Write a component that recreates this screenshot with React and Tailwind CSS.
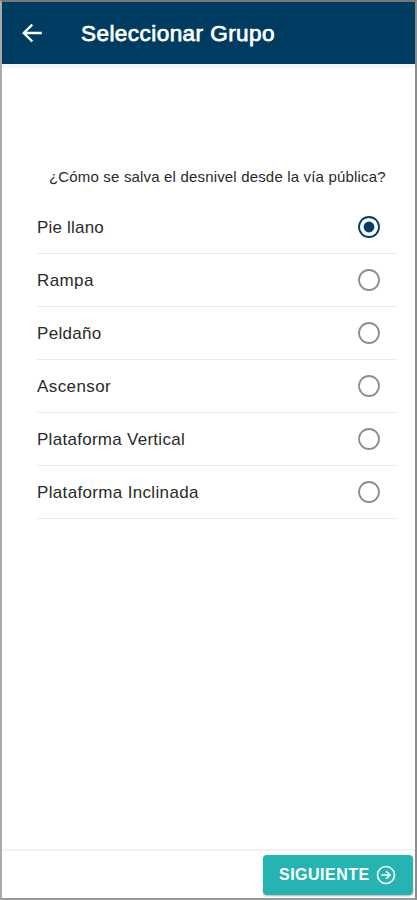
const OPTIONS = [
  { id: 'llano', label: 'Pie llano', tracking: 'tracking-[0.2px]' },
  { id: 'rampa', label: 'Rampa', tracking: 'tracking-[0.4px]' },
  { id: 'peldano', label: 'Peldaño', tracking: 'tracking-[0.3px]' },
  { id: 'ascensor', label: 'Ascensor', tracking: 'tracking-[0.4px]' },
  { id: 'vertical', label: 'Plataforma Vertical', tracking: 'tracking-[0.28px]' },
  { id: 'inclinada', label: 'Plataforma Inclinada', tracking: 'tracking-[0.34px]' },
];

function BackArrow() {
  return (
    <svg className="w-[22px] h-[20px]" viewBox="0 0 22 20" fill="none" stroke="currentColor" strokeWidth="2.3">
      <path d="M20.8 10H2.8M11.3 1.6L2.7 10L11.3 18.4" />
    </svg>
  );
}

function NextIcon() {
  return (
    <svg className="w-5 h-5" viewBox="0 0 20 20" fill="none" stroke="currentColor" strokeWidth="1.6">
      <circle cx="10" cy="10" r="8.5" />
      <path d="M5.4 10H13.8M10.2 6.2L14 10L10.2 13.8" />
    </svg>
  );
}

function Radio({ checked }) {
  return (
    <svg className={`w-[22px] h-[22px] ${checked ? 'text-[#003c6c]' : 'text-[#8e8e8e]'}`} viewBox="0 0 22 22">
      <circle cx="11" cy="11" r="10" fill="none" stroke="currentColor" strokeWidth="1.8" />
      {checked && <circle cx="11" cy="11" r="5.4" fill="currentColor" />}
    </svg>
  );
}

export default function App() {
  const selected = 'llano';

  return (
    <div className="flex flex-col w-[417px] h-[900px] bg-white border-2 border-t-[#777777] border-l-[#aaaaaa] border-r-[#8c8c8c] border-b-[#999999] font-['Liberation_Sans',Arial,sans-serif] text-[#2a2a2a]">
      <header className="flex items-center h-[62px] pl-[19px] bg-[#003c62] text-white shrink-0">
        <BackArrow />
        <h1 className="ml-[38px] pt-0.5 text-[22.5px] leading-[60px] tracking-[0.45px] [-webkit-text-stroke:0.75px_white] whitespace-nowrap">
          Seleccionar Grupo
        </h1>
      </header>
      <div className="h-1 bg-[#f4f4f4] shrink-0" />

      <main className="flex-1 pl-[35px] pr-[17px] pt-[98px]">
        <p className="ml-3 h-[35px] leading-[22px] text-[15px] tracking-[0.17px] whitespace-nowrap">
          ¿Cómo se salva el desnivel desde la vía pública?
        </p>
        <ul>
          {OPTIONS.map((option) => (
            <li
              key={option.id}
              className="flex items-center justify-between h-[53px] pr-[18px] border-b border-[#ebebeb]"
            >
              <span className={`pt-0.5 text-[17px] ${option.tracking}`}>{option.label}</span>
              <Radio checked={option.id === selected} />
            </li>
          ))}
        </ul>
      </main>

      <footer className="flex justify-end h-[49px] border-t-2 border-[#f2f2f2] pt-1 pr-[2px] shrink-0">
        <button className="flex items-center justify-between w-[150px] h-10 pl-4 pr-[17px] rounded bg-[#26b4b2] text-white shadow-[0_1px_2px_rgba(0,0,0,0.3)]">
          <span className="text-[16px] font-bold tracking-[0.5px]">SIGUIENTE</span>
          <NextIcon />
        </button>
      </footer>
    </div>
  );
}
